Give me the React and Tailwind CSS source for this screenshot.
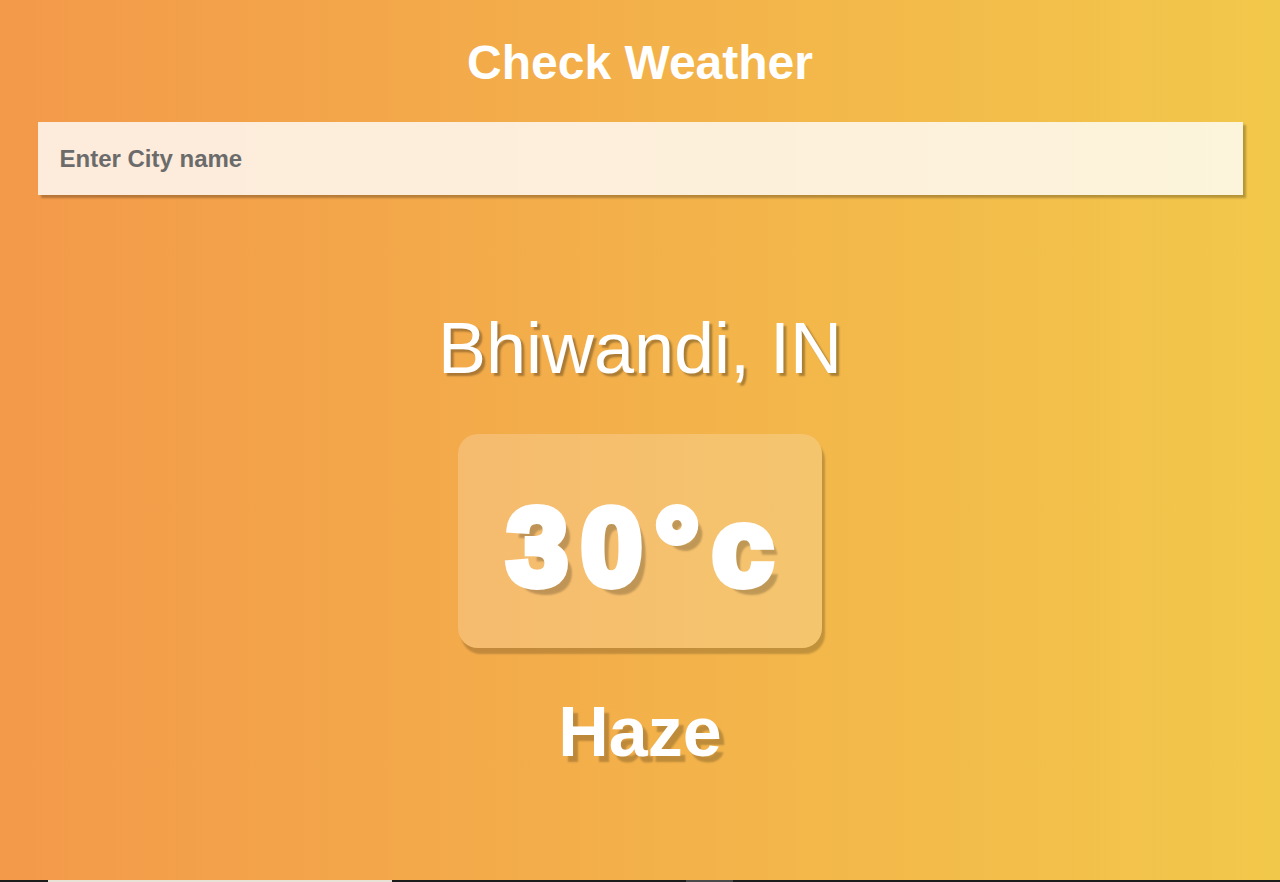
import React, { useState } from "react";

const font = { fontFamily: '"Liberation Sans", Arial, sans-serif' };

export default function App() {
  const [city, setCity] = useState("");

  return (
    <div style={font} className="w-full">
      <div className="min-h-[880px] bg-gradient-to-r from-[#f3994a] to-[#f2c84a] pt-[39px] flex flex-col items-center">
        <h1 className="text-[48px] leading-[48px] font-bold text-white">Check Weather</h1>

        <input
          type="text"
          value={city}
          onChange={(e) => setCity(e.target.value)}
          placeholder="Enter City name"
          className="mt-[35px] w-[1205px] h-[73px] px-[22px] bg-white/80 text-[24px] font-bold text-[#6b6b6b] placeholder:text-[#6b6b6b] outline-none shadow-[3px_3px_2px_rgba(0,0,0,0.25)]"
        />

        <h2 className="mt-[117px] text-[72px] leading-[72px] font-normal text-white [text-shadow:3px_3px_2px_rgba(0,0,0,0.3)]">
          Bhiwandi, IN
        </h2>

        <div className="mt-[50px] w-[364px] h-[214px] rounded-[20px] bg-white/20 shadow-[3px_6px_2px_rgba(0,0,0,0.2)] pt-[58px] flex justify-center">
          <span className="text-[110px] leading-[110px] font-bold text-white tracking-[13px] [-webkit-text-stroke:8px_white] [text-shadow:8px_9px_2px_rgba(0,0,0,0.22)] pl-[13px]">
            30°c
          </span>
        </div>

        <div className="mt-[49px] text-[70px] leading-[70px] font-bold text-white [text-shadow:5px_6px_2px_rgba(0,0,0,0.22)]">
          Haze
        </div>
      </div>

      <div className="h-[2px] bg-[#1c1c1c] flex">
        <div className="w-[48px]" />
        <div className="w-[344px] bg-[#e8e2d6]" />
        <div className="w-[294px]" />
        <div className="w-[47px] bg-[#4a4a4a]" />
      </div>
    </div>
  );
}
